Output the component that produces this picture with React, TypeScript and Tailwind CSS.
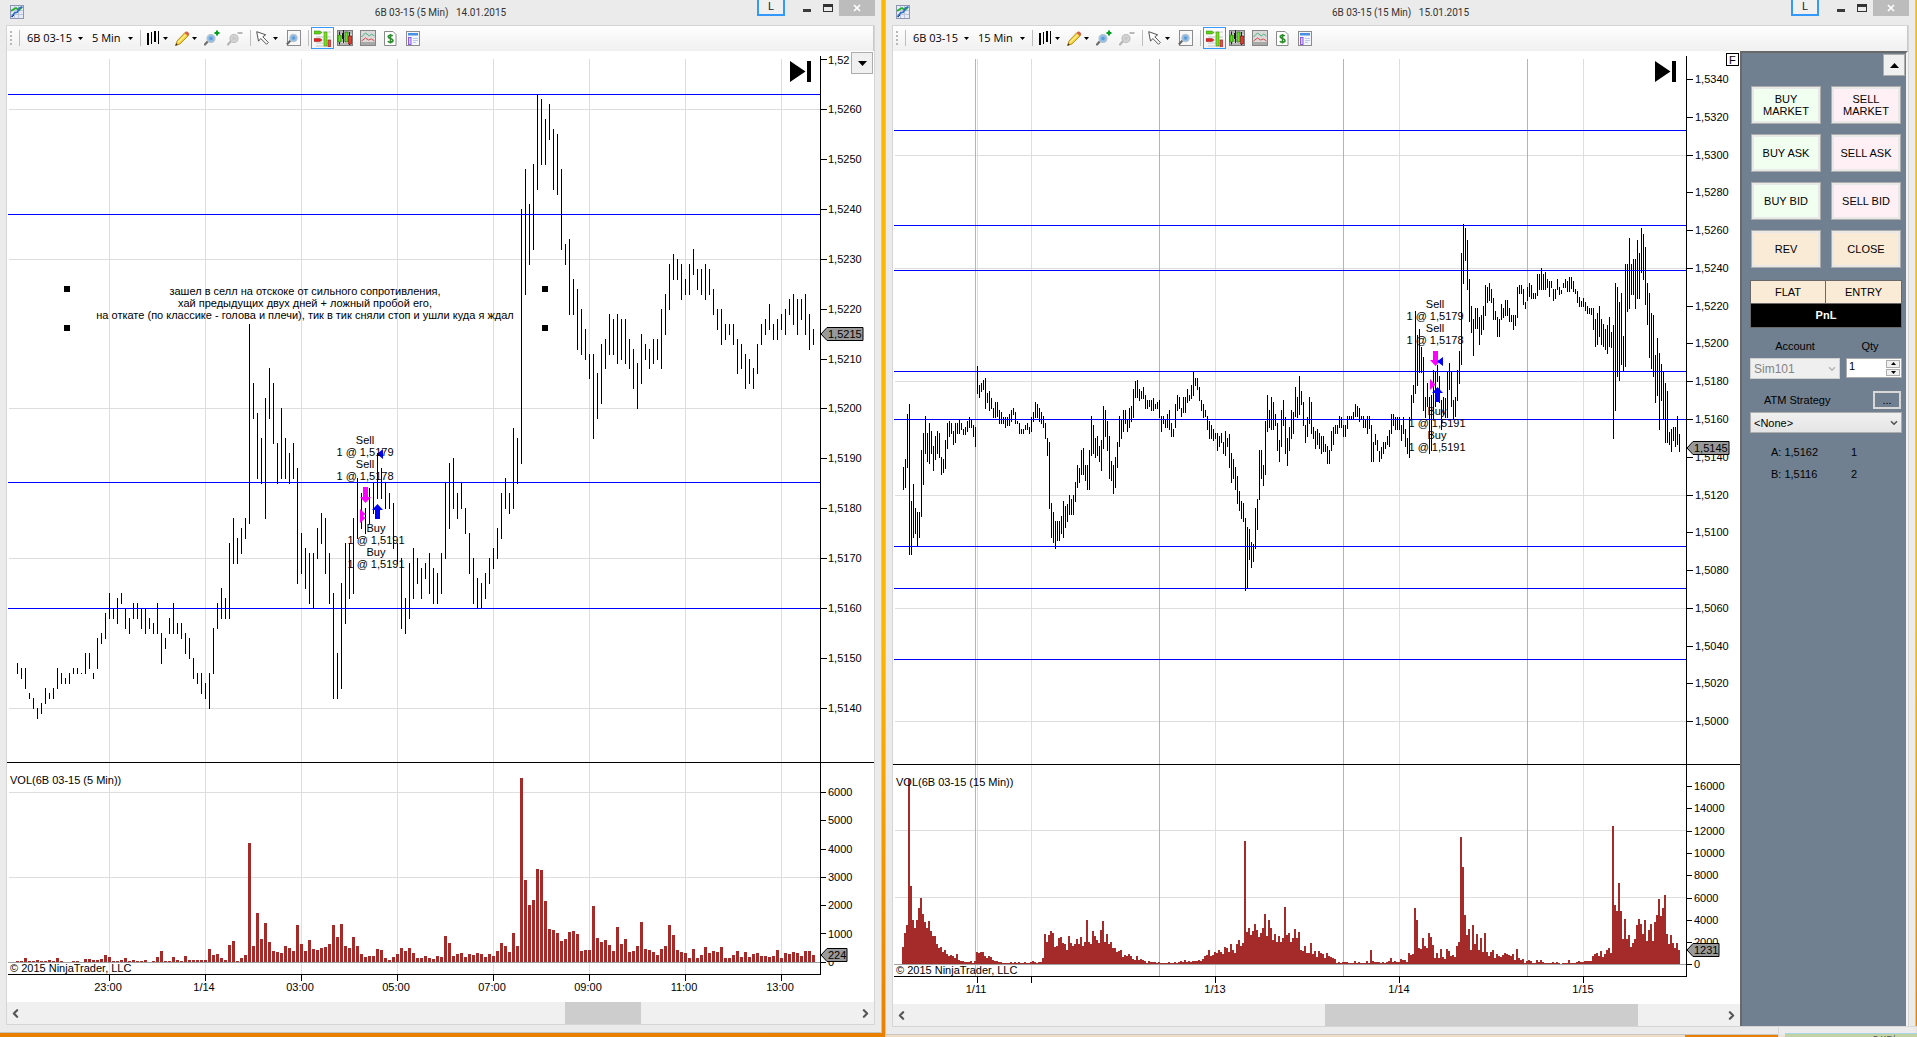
import React from 'react';
import { clsx } from 'clsx';
import { ChevronDown, ChevronLeft, ChevronRight } from 'lucide-react';

// high-low pairs, in ticks above 1,5100
const BARS_5M = `49,47 48,46 48,44 43,42 42,40 40,38 41,39 44,41 43,42 44,42 48,44 47,45 46,45 47,45 48,47 48,47 47,47 51,47 51,48 47,46
54,48 55,53 59,54 63,58 60,58 62,57 63,61 60,56 58,55 61,58 61,58 60,56 60,55 58,56 57,55 61,55 55,49 54,52 58,55 61,55
57,55 57,54 55,51 54,50 50,46 47,45 47,43 45,42 47,40 56,47 61,56 64,58 62,58 73,58 78,69 74,69 76,71 78,74 117,77 105,98
99,86 94,85 102,78 108,98 105,93 93,85 100,86 94,86 91,85 93,86 88,65 75,67 72,64 71,61 71,60 76,70 79,73 78,67 71,61 63,42
51,42 65,44 73,57 73,62 78,63 86,74 83,76 80,75 84,77 85,79 91,82 88,82 85,80 83,80 81,72 73,69 70,56 62,55 69,58 72,62
70,65 68,62 69,66 71,63 68,61 67,61 71,63 85,70 89,76 90,80 83,78 85,80 80,75 75,67 70,61 66,60 65,60 67,62 70,65 72,68
76,70 83,74 86,80 83,79 96,80 94,85 140,89 148,123 141,129 149,132 163,144 162,149 158,149 161,154 156,144 155,143 148,132 133,129 134,119 126,119
124,112 120,111 116,110 111,106 111,94 107,98 113,101 114,108 119,111 118,111 119,109 118,110 118,109 114,108 112,104 109,100 115,105 113,110 112,108 114,109
114,110 120,108 123,115 129,120 131,126 130,126 129,122 126,123 129,123 132,127 128,124 128,123 129,122 128,123 124,119 120,116 120,113 117,114 117,115 117,113
114,107 113,108 111,104 110,105 108,104 113,107 117,113 118,115 121,116 117,114 118,114 119,116 120,115 122,119 123,117 122,115 122,118 123,115 119,112 116,113`;

const VOL_5M = `1 1 4 1 1 2 1 1 2 1 4 1 0 0 1 1 0 3 3 2 2 3 7 5 1 1 2 4 1 2 1 1 2 0 1 5 11 1 1 5
2 1 6 2 2 2 2 2 13 7 8 4 2 17 21 1 4 7 119 16 49 23 39 20 11 10 9 16 14 11 37 18 11 22 13 12 14 15 18 37
25 38 16 14 25 16 8 5 6 6 13 12 4 2 5 8 14 11 14 9 4 4 6 4 3 6 5 26 19 6 8 9 5 8 7 9 8 5 8 6
11 19 16 10 29 16 184 82 57 62 93 92 61 33 32 29 21 23 30 31 28 11 12 12 56 24 20 22 17 11 35 18 23 10 11 16 40 13 12 10
7 13 16 37 27 12 10 9 4 13 4 7 15 9 11 10 15 4 4 7 11 5 10 5 8 9 6 6 5 6 12 4 9 8 10 9 6 11 11 7`;

// top-bottom pairs, in units of the chart grid below y = 200
const BARS_15M = `267,290 259,288 214,268 204,355 301,355 284,338 308,334 312,346 312,338 250,317 233,285 216,254 233,262 223,264 231,254 246,271 236,260 231,254 233,258 257,275
259,273 240,269 223,249 221,237 223,234 231,245 223,243 223,234 220,234 223,230 229,235 227,235 221,232 217,228 219,228 225,237 227,247 166,194 185,198 183,192
180,190 178,209 193,203 191,211 198,209 208,218 202,218 202,217 210,224 212,224 217,224 217,228 217,226 214,226 210,222 208,215 212,224 221,224 223,234 229,234
229,234 225,230 223,230 227,234 217,232 212,222 202,218 204,218 208,222 212,224 216,228 223,239 238,256 242,309 303,338 312,343 321,349 321,341 321,341 316,334
301,338 306,328 304,322 295,315 299,315 295,315 282,302 265,288 268,283 250,275 248,275 265,281 265,290 250,290 216,256 225,254 238,258 236,256 246,262 240,271
206,249 210,237 221,251 236,279 261,281 265,294 257,288 242,268 216,247 219,239 210,232 210,224 219,232 208,228 206,222 189,218 181,198 180,198 189,201 191,199
187,199 195,209 200,209 200,207 200,211 198,211 204,209 202,209 200,218 216,232 216,224 219,228 214,228 210,230 223,237 229,237 204,228 195,211 197,209 208,217
197,213 197,213 189,203 195,201 185,199 171,196 178,186 178,190 187,201 200,211 204,218 210,217 216,230 221,239 225,239 229,241 233,239 233,251 236,247 233,243
242,254 231,256 238,247 234,268 253,283 259,279 267,290 276,304 291,311 301,319 303,322 318,391 327,388 329,360 342,368 344,362 308,349 299,330 250,300 250,279
265,286 221,275 195,232 210,228 197,230 202,230 214,226 223,251 240,262 210,247 200,226 217,254 238,266 227,251 210,239 212,234 187,217 197,218 176,215 191,205
202,226 225,243 217,237 197,224 202,234 227,239 231,249 229,245 233,249 236,254 236,252 244,252 246,264 250,264 231,251 227,245 225,234 225,234 216,228 217,228
225,237 225,237 216,229 216,219 216,219 212,219 204,217 206,217 208,222 216,219 216,228 220,228 216,234 216,229 225,262 242,262 234,245 240,251 251,262 247,259
242,254 242,249 236,245 230,247 214,234 214,226 217,230 217,230 217,230 225,241 217,234 229,247 238,254 217,258 195,220 185,203 111,194 135,186 129,173 147,173
157,211 197,218 183,207 197,254 195,251 170,220 172,207 165,182 176,203 200,230 197,215 198,218 172,218 163,190 172,207 200,220 197,217 170,201 151,184 53,165
24,84 28,61 40,90 79,122 106,133 119,156 108,129 108,129 117,145 115,135 106,130 85,116 87,103 83,101 89,103 98,120 111,120 117,137 119,137 104,120
108,118 100,116 100,116 108,122 115,122 115,130 115,126 87,118 85,94 85,94 89,105 102,109 87,101 83,97 85,99 93,99 93,99 74,96 74,90 68,90
74,90 72,90 79,88 81,97 81,88 89,101 89,99 79,90 87,95 90,94 83,88 79,88 81,92 77,92 77,89 81,92 89,94 91,103 97,107 101,107
98,107 102,111 106,114 108,114 108,115 108,130 119,147 113,145 106,137 119,145 124,147 129,150 125,154 117,147 132,148 125,239 83,211 87,177 102,181 93,165
136,171 64,167 64,112 38,109 64,95 59,95 59,109 40,99 53,99 28,73 34,80 47,105 83,125 93,158 113,169 115,177 155,203 138,196 153,230 164,201
171,219 183,243 191,243 232,245 229,252 227,241 227,247 216,245 234,252`;

const VOL_15M = `17 31 39 185 78 44 36 44 56 66 50 42 36 43 33 28 28 20 16 17 12 14 10 8 9 8 6 10 4 3 3 2 2 2 3 1 3 12 11 12
12 8 6 8 7 4 3 3 2 2 1 1 1 1 2 1 2 1 2 1 1 2 1 1 2 3 2 1 2 2 6 30 22 29 33 31 17 18 26 27
21 20 14 28 21 18 20 25 20 27 18 22 44 22 20 33 28 24 21 34 43 22 30 20 22 16 16 12 13 14 7 9 8 10 8 5 4 8 4 5
4 3 1 3 2 2 2 1 2 1 1 1 1 2 1 1 2 1 2 3 2 4 2 3 2 3 3 3 4 3 5 8 9 14 8 9 12 11 14 12
10 17 16 12 20 14 11 20 24 18 21 123 32 36 29 33 40 34 27 31 36 50 28 44 36 24 30 22 28
22 26 57 29 31 22 26 35 26 32 14 13 18 11 11 21 10 13 7 13 11 10 6 11 8 7 6 5 1 2 1 2 2 2 1 1 1 3 1 2
1 1 1 3 1 14 3 2 2 2 1 2 1 2 3 6 2 3 2 2 5 4 4 2 11 9 10 56 44 16 15 26 18 16 31 27 19 6 11 6
15 7 5 15 13 8 9 7 18 22 127 97 49 29 35 14 39 20 30 14 26 12 31 12 8 12 14 6 10 8 7 9 11 10 9 8 10 4 15 6
4 5 1 3 4 3 1 1 4 2 4 2 1 1 1 1 2 1 2 1 0 1 1 1 4 1 1 1 2 3 2 2 3 3 3 3 8 10 11 8
13 7 10 14 16 11 138 59 53 81 53 25 45 25 29 17 21 25 39 45 40 30 44 23 34 40 23 42 49 65 48 56 69 30 20 29 21 16 21 14`;

const pairs = (s: string) => s.split(/\s+/).map(p => p.split(',').map(Number));
const nums = (s: string) => s.split(/\s+/).map(Number);

const box = (x: number, y: number, w: number, h: number) => `M${x} ${y}h${w}v${h}h${-w}z`;

const y5 = (t: number) => Math.round(608 - (t - 60) * 4.99);
const y15 = (t: number) => Math.round(419 - (t - 60) * 1.889);

const PRICE_5M = pairs(BARS_5M).map(([h, l], i) => box(17 + i * 4, y5(h), 1, y5(l) - y5(h) + 1)).join('');
const VOLUME_5M = nums(VOL_5M).map((v, i) => box(16 + i * 4, 962 - v, 3, v)).join('');
const PRICE_15M = pairs(BARS_15M).map(([t, b], i) => box(903 + i * 2, 200 + t, 1, b - t)).join('');
const VOLUME_15M = nums(VOL_15M).map((v, i) => box(902 + i * 2, 964 - v, 2, v)).join('');

const label = (t: number) => `1,5${String(t + 100).padStart(3, '0')}`;

function Caret() {
  return <svg width="5" height="3" viewBox="0 0 5 3" className="shrink-0"><path d="M0 0h5L2.5 3z" fill="#000" /></svg>;
}

function Sep() {
  return <span className="h-4 w-px shrink-0 bg-[#bdbdbd]" />;
}

function ChartLogo() {
  return (
    <svg width="14" height="14" viewBox="0 0 14 14" className="shrink-0">
      <rect x=".5" y=".5" width="13" height="13" fill="#e6eaf4" stroke="#8d97b5" />
      <path d="M4.5 1v12M8.5 1v12M1 5.5h12M1 9.5h12" stroke="#bcc4da" />
      <path d="M1 6l3-2 2-1 3 2 3-3" fill="none" stroke="#25b025" strokeWidth="1.8" />
      <path d="M1.5 12l3-4 3-1 2-4 3-1" fill="none" stroke="#2f6fc4" strokeWidth="1.6" />
      <path d="M2 12l2-2" stroke="#173f86" />
    </svg>
  );
}

function Magnifier({ muted, mark }: { muted?: boolean; mark: 'plus' | 'minus' }) {
  return (
    <svg width="16" height="16" viewBox="0 0 16 16">
      <path d="M1 14.5l4-4.5" stroke={muted ? '#b5b5b5' : '#6d6d6d'} strokeWidth="2.2" strokeLinecap="round" />
      <circle cx="7" cy="8.500" r="4" fill={muted ? '#d4d4d4' : '#8fbde6'} stroke={muted ? '#bfbfbf' : '#b9c3cc'} strokeWidth="1.2" />
      <circle cx="7" cy="8.500" r="1.8" fill={muted ? '#c8c8c8' : '#5d9bd6'} />
      {mark === 'plus'
        ? <path d="M13 .5v5M10.500 3h5" stroke="#00a01e" strokeWidth="2" />
        : <path d="M10.500 3h5" stroke="#a9a9a9" strokeWidth="1.6" />}
    </svg>
  );
}

function Toolbar({ interval, wide }: { interval: string; wide?: boolean }) {
  return (
    <div className="flex h-[25px] items-center overflow-hidden border-r border-[#c8c8c8] bg-gradient-to-b from-[#fefefe] to-[#f0f0f0] pl-[3px] pb-px font-['Open_Sans','Noto_Sans',sans-serif] text-[11px] leading-4 text-black">
      <svg width="3" height="14" viewBox="0 0 3 14" className="mr-[6px] shrink-0">
        <path d="M0 0h2v2h-2zM0 4h2v2h-2zM0 8h2v2h-2zM0 12h2v2h-2z" fill="#b8b8b8" />
      </svg>
      <Sep />
      <button className="ml-[7px] flex items-center gap-[6px] whitespace-nowrap"><span className="w-[45px] text-left">6B 03-15</span><Caret /></button>
      <button className="ml-[9px] flex items-center gap-[6px] whitespace-nowrap">
        <span className={clsx('text-left', wide ? 'w-[36px]' : 'w-[30px]')}>{interval}</span><Caret />
      </button>
      <span className="w-[7px]" />
      <Sep />
      <button aria-label="Chart style" className="ml-[6px] flex items-center gap-[3px]">
        <svg width="13" height="14" viewBox="0 0 13 14" shapeRendering="crispEdges"><path d="M0 2h2v12H0zM4 1h1v12H4zM7 0h2v11H7zM11 0h1v13h-1z" fill="#000" /></svg>
        <Caret />
      </button>
      <button aria-label="Drawing tools" className="ml-[7px] flex items-center gap-[2px]">
        <svg width="15" height="15" viewBox="0 0 15 15">
          <path d="M.5 14.500l1.500-4.500L10 1.500l3.500 3L5 13z" fill="#f7cf2f" stroke="#a8801b" strokeWidth=".8" />
          <path d="M3 11.500l8.500-8.500" stroke="#fff0a0" strokeWidth="1.200" />
          <path d="M9.500 2L11 .6c.8-.6 3.800 1.400 3 2.800L12.800 5z" fill="#d9604a" />
          <path d="M.3 14.700l1-2.500 1.500 1.500z" fill="#3a2a10" />
        </svg>
        <Caret />
      </button>
      <button aria-label="Zoom in" className="ml-[7px]"><Magnifier mark="plus" /></button>
      <button aria-label="Zoom out" className="ml-[7px] mr-[7px]"><Magnifier mark="minus" muted /></button>
      <Sep />
      <button aria-label="Cursor" className="ml-[5px] flex items-center gap-[4px]">
        <svg width="13" height="14" viewBox="0 0 13 14">
          <path d="M.7.700l1.800 9.500 2.300-2.700 5.700 5.800 1.800-1.800L6.800 5.800l2.900-2z" fill="#fff" stroke="#555" />
        </svg>
        <Caret />
      </button>
      <button aria-label="Zoom frame" className="ml-[8px] mr-[7px]">
        <svg width="15" height="16" viewBox="0 0 15 16">
          <rect x="1.500" y=".5" width="13" height="15" fill="#f8f8f8" stroke="#8c8c8c" />
          <path d="M.8 14.500L5 10" stroke="#666" strokeWidth="2" />
          <circle cx="7.500" cy="8" r="3.800" fill="#8fbde6" stroke="#bbc5ce" />
          <circle cx="7.500" cy="8" r="1.700" fill="#5d9bd6" />
        </svg>
      </button>
      <Sep />
      <button aria-label="Chart trader" className="ml-[2px] flex h-[22px] w-[23px] items-center justify-center border border-[#3399ff]">
        <svg width="17" height="17" viewBox="0 0 17 17">
          <path d="M2 7h15M2 13h15M2 16h15M8 2h9M8 10h9" stroke="#c8c8c8" />
          <path d="M0 1h6l2 1.500L6 4H0z" fill="#5fd118" stroke="#2e7d0c" strokeWidth=".5" />
          <path d="M0 8.500h6L8 10l-2 1.500H0z" fill="#e02424" stroke="#8d1f1f" strokeWidth=".5" />
          <path d="M10 2h3v14h-3z" fill="#7be01c" stroke="#2e7d0c" strokeWidth=".5" />
          <path d="M14 10h3v7h-3z" fill="#e05050" stroke="#8d1f1f" strokeWidth=".5" />
        </svg>
      </button>
      <button aria-label="Data series" className="ml-[3px]">
        <svg width="16" height="16" viewBox="0 0 16 16">
          <rect x=".5" y=".5" width="15" height="15" fill="#b5b5b5" stroke="#7c7c7c" />
          <path d="M1 4.500h14M1 8.500h14M1 12.500h14" stroke="#ddd" />
          <path d="M2.500 1.500v13M6.500 0v13M12.500 2v13" stroke="#222" />
          <path d="M1 5h3v7H1zM8 2h3v10H8z" fill="#5be01c" stroke="#1f5a08" strokeWidth=".6" />
          <path d="M5 3h2v6H5z" fill="#1a1a1a" />
          <path d="M11.500 6h3v8h-3z" fill="#e23a2e" stroke="#711" strokeWidth=".6" />
        </svg>
      </button>
      <button aria-label="Indicators" className="ml-[7px]">
        <svg width="16" height="16" viewBox="0 0 16 16">
          <rect x=".5" y=".5" width="15" height="15" fill="#d9d9d9" stroke="#858585" />
          <path d="M1 12h14v3H1z" fill="#a8a8a8" />
          <path d="M1.500 7l4-4 4 3 2-2 3 2" fill="none" stroke="#4fae7f" />
          <path d="M1.500 11l4-3 3 2 3-1 3 2" fill="none" stroke="#d94b4b" />
        </svg>
      </button>
      <button aria-label="Strategies" className="ml-[8px]">
        <svg width="13" height="15" viewBox="0 0 13 15">
          <path d="M.5.500h8.500l3 3v11H.5z" fill="#fff" stroke="#8a8a8a" />
          <path d="M8.700 5.200C8 4 4.200 3.800 4.200 5.800S9 7.300 9 9.500 5 11.500 3.800 10.200M6.500 3v9.500" fill="none" stroke="#2c8c2c" strokeWidth="1.600" />
        </svg>
      </button>
      <button aria-label="Properties" className="ml-[9px]">
        <svg width="14" height="15" viewBox="0 0 14 15">
          <rect x=".5" y=".5" width="13" height="14" fill="#f3f6fc" stroke="#8c8c8c" />
          <path d="M2 2h10v2.500H2z" fill="#4a90e2" />
          <rect x="2.500" y="6.500" width="2.500" height="7" fill="#d9c9ff" stroke="#8a5be0" />
          <path d="M7 7.500h5M7 9.500h5M7 11.500h3" stroke="#b9c9e6" />
        </svg>
      </button>
    </div>
  );
}

function TitleBar({ title }: { title: string }) {
  return (
    <header className="relative flex h-[25px] items-center justify-center font-[Roboto,'Noto_Sans',sans-serif] text-[10px] text-[#333]">
      <span className="absolute left-[4px] top-[5px]"><ChartLogo /></span>
      <h1 className="whitespace-pre">{title}</h1>
      <div className="absolute right-0 top-0 flex items-start">
        <button className="mr-[18px] h-4 w-7 border-2 border-t-0 border-[#3399ff] bg-[#f0f0f0] text-[11px] leading-[14px] text-[#222]">L</button>
        <button aria-label="Minimize" className="mr-[12px] h-4 w-2"><span className="mt-[5px] block h-[3px] bg-[#3a3a3a]" /></button>
        <button aria-label="Maximize" className="mr-[6px] mt-1 h-[8px] w-[10px] border border-t-[3px] border-[#333]" />
        <button aria-label="Close" className="flex h-4 w-9 items-center justify-center bg-[#bcbcbc]">
          <svg width="8" height="8" viewBox="0 0 8 8"><path d="M1 1l6 6M7 1l-6 6" stroke="#fff" strokeWidth="1.700" /></svg>
        </button>
      </div>
    </header>
  );
}

function Marker({ x, y, w, text }: { x: number; y: number; w: number; text: string }) {
  return (
    <g>
      <path d={`M${x} ${y}l6-6.500h${w}v13h${-w}z`} fill="#999" stroke="#000" />
      <text x={x + 7} y={y + 4}>{text}</text>
    </g>
  );
}

function Fill({ x, y, action, lines }: { x: number; y: number; action: string; lines: string[] }) {
  return (
    <g textAnchor="middle">
      {lines.map((line, i) => (
        <React.Fragment key={i}>
          <text x={x} y={y + i * 24}>{action}</text>
          <text x={x} y={y + 12 + i * 24}>{line}</text>
        </React.Fragment>
      ))}
    </g>
  );
}

function SkipIcon({ x }: { x: number }) {
  return <path d={`M${x} 61l15.500 10.500L${x} 82zM${x + 17} 61h4v21h-4z`} fill="#000" />;
}

function Chart5m() {
  const prices = Array.from({ length: 13 }, (_, i) => 160 - i * 10);
  return (
    <svg viewBox="7 51 867 951" className="block h-auto w-full bg-white font-['Liberation_Sans',Arial,sans-serif] text-[11px]" role="img" aria-label="6B 03-15 5 minute chart">
      <g shapeRendering="crispEdges">
        <path d={[109, 205, 301, 397, 493, 589, 685, 781].map(x => box(x, 59, 1, 915)).join('')} fill="#dedede" />
        <path d={[109, 259, 408, 558, 708, 792, 877].map(y => box(9, y, 811, 1)).join('')} fill="#dedede" />
        <path d={PRICE_5M} fill="#000" />
        <path d={box(8, 962, 812, 1)} fill="#a0a0a0" />
        <path d={VOLUME_5M} fill="#a52a2a" />
        <path d={[94, 214, 482, 608].map(y => box(8, y, 812, 1)).join('')} fill="#00f" />
        <path d={box(820, 56, 1, 919) + box(8, 974, 812, 1) + box(7, 762, 867, 1)} fill="#000" />
        <path d={[170, ...prices].map(t => box(820, y5(t), 7, 1)).join('')} fill="#000" />
        <path d={[792, 820, 849, 877, 905, 933, 962].map(y => box(820, y, 6, 1)).join('')} fill="#000" />
        <path d={[109, 205, 301, 397, 493, 589, 685, 781].map(x => box(x, 974, 1, 7)).join('')} fill="#000" />
        <path d={[[64, 286], [542, 286], [64, 325], [542, 325]].map(([x, y]) => box(x, y, 6, 6)).join('')} fill="#000" />
      </g>
      <SkipIcon x={790} />
      <text x="828" y="64">1,52</text>
      {prices.map(t => <text key={t} x="828" y={y5(t) + 4}>{label(t)}</text>)}
      {[6000, 5000, 4000, 3000, 2000, 1000, 0].map((v, i) => (
        <text key={v} x="828" y={Math.round(792 + i * 28.300) + 4}>{v}</text>
      ))}
      {['23:00', '1/14', '03:00', '05:00', '07:00', '09:00', '11:00', '13:00'].map((t, i) => (
        <text key={t} x={108 + i * 96} y="991" textAnchor="middle">{t}</text>
      ))}
      <text x="10" y="784">VOL(6B 03-15 (5 Min))</text>
      <text x="10" y="972">© 2015 NinjaTrader, LLC</text>
      <g textAnchor="middle">
        <text x="305" y="295">зашел в селл на отскоке от сильного сопротивления,</text>
        <text x="305" y="307">хай предыдущих двух дней + ложный пробой его,</text>
        <text x="305" y="319">на откате (по классике - голова и плечи), тик в тик сняли стоп и ушли куда я ждал</text>
      </g>
      <path d="M363 487h5v10h3l-5.500 6-5.500-6h3zM360 509l5.500 5-2.500 2 2.500 2-5.500 5z" fill="#f0f" />
      <path d="M375 519v-9h-3l5.500-6 5.500 6h-3v9zM383 449v10l-6-5z" fill="#00f" />
      <Fill x={365} y={444} action="Sell" lines={['1 @ 1,5179', '1 @ 1,5178']} />
      <Fill x={376} y={532} action="Buy" lines={['1 @ 1,5191', '1 @ 1,5191']} />
      <Marker x={821} y={334} w={36} text="1,5215" />
      <Marker x={821} y={955} w={20} text="224" />
    </svg>
  );
}

function Chart15m() {
  const prices = Array.from({ length: 18 }, (_, i) => 240 - i * 20);
  return (
    <svg viewBox="893 51 847 953" className="block h-auto w-full bg-white font-['Liberation_Sans',Arial,sans-serif] text-[11px]" role="img" aria-label="6B 03-15 15 minute chart">
      <g shapeRendering="crispEdges">
        <path d={[155, 268, 381, 495, 608, 721, 830, 897].map(y => box(895, y, 791, 1)).join('')} fill="#dedede" />
        <path d={[977, 1031, 1215, 1399, 1583].map(x => box(x, 59, 1, 917)).join('')} fill="#dedede" />
        <path d={[975, 1159, 1343, 1527].map(x => box(x, 59, 1, 917)).join('')} fill="#b4b4b4" />
        <path d={PRICE_15M} fill="#000" />
        <path d={box(894, 964, 792, 1)} fill="#a0a0a0" />
        <path d={VOLUME_15M} fill="#a52a2a" />
        <path d={[130, 225, 270, 371, 419, 546, 588, 659].map(y => box(894, y, 792, 1)).join('')} fill="#00f" />
        <path d={box(1686, 56, 1, 921) + box(894, 976, 792, 1) + box(893, 764, 847, 1)} fill="#000" />
        <path d={prices.map(t => box(1686, y15(t), 7, 1)).join('')} fill="#000" />
        <path d={[0, 1, 2, 3, 4, 5, 6, 7, 8].map(i => box(1686, Math.round(786 + i * 22.300), 6, 1)).join('')} fill="#000" />
        <path d={[977, 1031, 1215, 1399, 1583].map(x => box(x, 976, 1, 7)).join('')} fill="#000" />
        <rect x="1726" y="53" width="13" height="13" fill="#000" />
        <rect x="1727" y="54" width="11" height="11" fill="#fff" />
      </g>
      <SkipIcon x={1655} />
      <text x="1729" y="64">F</text>
      {prices.map(t => <text key={t} x="1695" y={y15(t) + 4}>{label(t)}</text>)}
      {[16000, 14000, 12000, 10000, 8000, 6000, 4000, 2000, 0].map((v, i) => (
        <text key={v} x="1694" y={Math.round(786 + i * 22.300) + 4}>{v}</text>
      ))}
      {([['1/11', 976], ['1/13', 1215], ['1/14', 1399], ['1/15', 1583]] as [string, number][]).map(([t, x]) => (
        <text key={t} x={x} y="993" textAnchor="middle">{t}</text>
      ))}
      <text x="896" y="786">VOL(6B 03-15 (15 Min))</text>
      <text x="896" y="974">© 2015 NinjaTrader, LLC</text>
      <path d="M1433 351h5v9h3l-5.500 6-5.500-6h3zM1430 379l5.500 5.500-5.500 5.500z" fill="#f0f" />
      <path d="M1435 402v-9h-3l5.500-6 5.500 6h-3v9zM1443 357v9l-6-4.500z" fill="#00f" />
      <Fill x={1435} y={308} action="Sell" lines={['1 @ 1,5179', '1 @ 1,5178']} />
      <Fill x={1437} y={415} action="Buy" lines={['1 @ 1,5191', '1 @ 1,5191']} />
      <Marker x={1687} y={448} w={36} text="1,5145" />
      <Marker x={1687} y={950} w={26} text="1231" />
    </svg>
  );
}

function ScrollBar({ thumb, before, after }: { thumb: string; before: string; after: string }) {
  return (
    <div className="flex h-[22px] bg-[#f0f0f0] text-[#555]">
      <button aria-label="Scroll left" className="flex w-[17px] items-center justify-center"><ChevronLeft size={13} strokeWidth={4} /></button>
      <span className={before} />
      <span className={clsx('bg-[#cdcdcd]', thumb)} />
      <span className={after} />
      <button aria-label="Scroll right" className="flex w-[17px] items-center justify-center"><ChevronRight size={13} strokeWidth={4} /></button>
    </div>
  );
}

const ORDERS: { lines: string[]; color: string }[] = [
  { lines: ['BUY', 'MARKET'], color: 'bg-[#f0fff0]' },
  { lines: ['SELL', 'MARKET'], color: 'bg-[#fff0f5]' },
  { lines: ['BUY ASK'], color: 'bg-[#f0fff0]' },
  { lines: ['SELL ASK'], color: 'bg-[#fff0f5]' },
  { lines: ['BUY BID'], color: 'bg-[#f0fff0]' },
  { lines: ['SELL BID'], color: 'bg-[#fff0f5]' },
  { lines: ['REV'], color: 'bg-[#faebd7]' },
  { lines: ['CLOSE'], color: 'bg-[#faebd7]' },
];

function TradePanel() {
  return (
    <aside className="flex w-[168px] shrink-0 flex-col border-l-2 border-t-2 border-r-2 border-l-[#696969] border-t-[#696969] border-r-[#f4f4f4] bg-[#708090] font-['Liberation_Sans',Arial,sans-serif] text-[11px] leading-3 text-black">
      <button aria-label="Collapse" className="mr-px mt-px flex h-[22px] w-[22px] items-center justify-center self-end border border-[#adadad] bg-[#f0f0f0]">
        <svg width="9" height="5" viewBox="0 0 9 5"><path d="M0 5L4.500 0 9 5z" fill="#000" /></svg>
      </button>
      <div className="ml-[9px] mr-[5px] mt-[10px] grid grid-cols-2 gap-[10px]">
        {ORDERS.map(({ lines, color }) => (
          <button key={lines.join()} className={clsx('flex h-[38px] flex-col items-center justify-center border border-[#adadad] shadow-[inset_0_0_0_2px_#e8e8e8]', color)}>
            {lines.map(l => <span key={l}>{l}</span>)}
          </button>
        ))}
      </div>
      <div className="ml-[8px] mr-[4px] mt-[12px] border border-[#696969]">
        <div className="grid h-[23px] grid-cols-2 divide-x divide-[#696969] border-b border-[#696969] bg-[#faebd7]">
          <button>FLAT</button>
          <button>ENTRY</button>
        </div>
        <div className="h-[23px] bg-black text-center font-bold leading-[23px] text-white">PnL</div>
      </div>
      <div className="ml-[8px] mr-[4px] mt-[12px] flex">
        <div className="w-[96px]">
          <label htmlFor="account" className="block h-[18px] w-[90px] text-center">Account</label>
          <div className="relative w-[90px]">
            <select id="account" disabled className="block h-[21px] w-full appearance-none border border-[#d0d0d0] bg-[#efefef] pl-[3px] text-[12px] text-[#838383]">
              <option>Sim101</option>
            </select>
            <ChevronDown size={10} strokeWidth={4} className="absolute right-[3px] top-[6px] text-[#b8b8b8]" />
          </div>
        </div>
        <div className="flex-1">
          <label htmlFor="qty" className="block h-[18px] pr-2 text-center">Qty</label>
          <div className="flex h-[20px] border border-[#ababab] bg-white">
            <input id="qty" defaultValue="1" className="w-0 flex-1 pb-[4px] pl-[2px]" />
            <div className="flex w-[16px] flex-col gap-px p-px">
              <button aria-label="Increase" className="flex flex-1 items-center justify-center border border-[#adadad] bg-[#f0f0f0]">
                <svg width="5" height="3" viewBox="0 0 5 3"><path d="M0 3L2.500 0 5 3z" /></svg>
              </button>
              <button aria-label="Decrease" className="flex flex-1 items-center justify-center border border-[#adadad] bg-[#f0f0f0]"><Caret /></button>
            </div>
          </div>
        </div>
      </div>
      <div className="ml-[8px] mr-[4px] mt-[12px] flex items-center justify-between pl-[14px]">
        <label htmlFor="atm">ATM Strategy</label>
        <button aria-label="Edit strategy" className="mr-px h-[18px] w-[28px] border-2 border-[#d8d8d8] leading-[10px]">...</button>
      </div>
      <div className="relative ml-[8px] mr-[4px] mt-[3px]">
        <select id="atm" className="block h-[21px] w-full appearance-none border border-[#adadad] bg-gradient-to-b from-[#f0f0f0] to-[#e5e5e5] pl-[3px]">
          <option>&lt;None&gt;</option>
        </select>
        <ChevronDown size={10} strokeWidth={4} className="absolute right-[3px] top-[6px] text-[#555]" />
      </div>
      <dl className="ml-[8px] mr-[4px] mt-[13px] grid grid-cols-[80px_1fr] gap-y-[10px] pl-[21px]">
        <dt>A: 1,5162</dt><dd>1</dd>
        <dt>B: 1,5116</dt><dd>2</dd>
      </dl>
    </aside>
  );
}

export default function App() {
  return (
    <div className="relative min-h-[1037px] overflow-hidden bg-gradient-to-b from-[#ffb900] from-60% to-[#ea8000]">
      <main className="flex items-start gap-[3px] pr-px">
        <section className="min-w-0 flex-[882_1_0%]">
          <div className="border-b border-r border-[#c6c6c6] bg-[#ebebeb] px-[6px] pb-[7px]">
            <TitleBar title="6B 03-15 (5 Min)   14.01.2015" />
            <div className="relative border border-[#d5d5d5] bg-white">
              <Toolbar interval="5 Min" />
              <Chart5m />
              <button aria-label="Show panel" className="absolute right-px top-[26px] flex h-[22px] w-[22px] items-center justify-center border border-[#adadad] bg-[#f0f0f0]">
                <svg width="9" height="5" viewBox="0 0 9 5"><path d="M0 0h9L4.500 5z" fill="#000" /></svg>
              </button>
              <ScrollBar before="flex-[541_1_0%]" thumb="flex-[76_1_0%]" after="flex-[216_1_0%]" />
            </div>
          </div>
        </section>
        <section className="min-w-0 flex-[1031_1_0%]">
          <div className="border-x border-b border-[#c6c6c6] bg-[#ebebeb] px-[6px] pb-[7px]">
            <TitleBar title="6B 03-15 (15 Min)   15.01.2015" />
            <div className="border border-[#d5d5d5] bg-white">
              <Toolbar interval="15 Min" wide />
              <div className="flex">
                <div className="min-w-0 flex-1">
                  <Chart15m />
                  <ScrollBar before="flex-[415_1_0%]" thumb="flex-[313_1_0%]" after="flex-[85_1_0%]" />
                </div>
                <TradePanel />
              </div>
            </div>
          </div>
        </section>
      </main>
      <div className="absolute bottom-0 left-[885px] right-[232px] h-[2px] bg-[#f3dcc4]" />
      <div className="absolute bottom-0 right-0 flex h-[11px] w-[139px] items-end border-l border-t border-[#d8d8d8] bg-[#ececec]/90 pl-[6px]">
        <div className="h-[4px] flex-1 overflow-hidden border-t border-[#a8d4e8] bg-[#c2d2a4] pl-[88px] font-['Liberation_Sans',Arial,sans-serif] text-[9px] leading-[11px] text-[#555]">5 KB/</div>
      </div>
    </div>
  );
}
